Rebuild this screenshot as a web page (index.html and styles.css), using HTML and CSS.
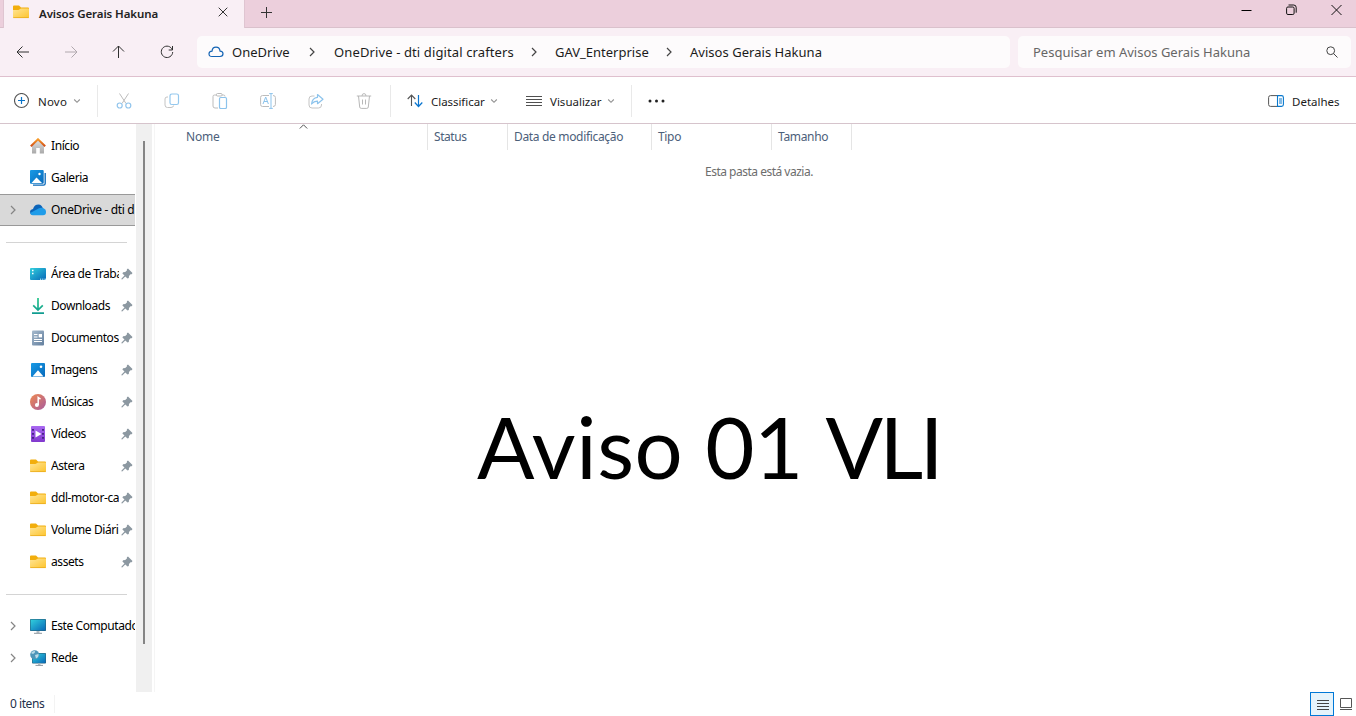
FILE: index.html
```html
<!DOCTYPE html>
<html lang="pt-BR">
<head>
<meta charset="utf-8">
<title>Avisos Gerais Hakuna</title>
<link rel="stylesheet" href="styles.css">
</head>
<body>
<svg class="defs" width="0" height="0">
  <defs>
    <linearGradient id="gFolder" x1="0" y1="0" x2="1" y2="1"><stop offset="0" stop-color="#ffe596"/><stop offset="1" stop-color="#fdc42d"/></linearGradient>
    <linearGradient id="gBlue" x1="0" y1="0" x2="1" y2="1"><stop offset="0" stop-color="#199be6"/><stop offset="1" stop-color="#0669bb"/></linearGradient>
    <linearGradient id="gTeal" x1="0" y1="0" x2="1" y2="1"><stop offset="0" stop-color="#31d0dd"/><stop offset="1" stop-color="#0868b8"/></linearGradient>
    <linearGradient id="gHouse" x1="0" y1="0" x2="0" y2="1"><stop offset="0" stop-color="#e2e2e2"/><stop offset="1" stop-color="#a9a9a9"/></linearGradient>
    <linearGradient id="gRoof" x1="0" y1="0" x2="0" y2="1"><stop offset="0" stop-color="#f79a28"/><stop offset="1" stop-color="#d04d16"/></linearGradient>
    <linearGradient id="gDown" gradientUnits="userSpaceOnUse" x1="0" y1="0" x2="0" y2="16"><stop offset="0" stop-color="#25c58a"/><stop offset="1" stop-color="#109b91"/></linearGradient>
    <linearGradient id="gDoc" x1="0" y1="0" x2="1" y2="1"><stop offset="0" stop-color="#a6bacd"/><stop offset="1" stop-color="#637f9e"/></linearGradient>
    <linearGradient id="gMusic" x1="0" y1="0" x2="1" y2="1"><stop offset="0" stop-color="#ef8950"/><stop offset="1" stop-color="#a85b9e"/></linearGradient>
    <linearGradient id="gVideo" x1="0" y1="0" x2="0" y2="1"><stop offset="0" stop-color="#a968f1"/><stop offset="1" stop-color="#8138cd"/></linearGradient>
    <symbol id="folder" viewBox="0 0 16 16"><path d="M0 2.500Q0 1.500 1 1.500h5l2 2h7q1 0 1 1v3H0z" fill="#f2ae0c"/><path d="M0 6h5.500L8 4.500h7.300q.7 0 .7.800v7.900q0 .8-.8.800H.8Q0 14 0 13.200z" fill="url(#gFolder)"/><path d="M.3 13.600h15.400" stroke="#e9a91b" stroke-width=".8"/></symbol>
    <symbol id="pin" viewBox="0 0 12 12"><path d="M7 .5 11.500 5 10.700 6.200 9.500 6.200 8 7.900 7.800 9.900 6.500 10.600 4.300 8.400 1.200 11.400.4 11.300.5 10.500 3.500 7.600 1.400 5.500 2.100 4.300 4.200 4.100 5.900 2.600 5.900 1.300z" fill="#8c98a1"/></symbol>
    <symbol id="chev" viewBox="0 0 8 12"><path d="M2 2 6 6 2 10" fill="none" stroke="currentColor" stroke-width="1.200"/></symbol>
    <symbol id="down" viewBox="0 0 8 6"><path d="m1.200 1.500 2.800 2.800 2.800-2.800" fill="none" stroke="#929292" stroke-width="1.100"/></symbol>
  </defs>
</svg>
<div class="window">
  <header class="titlebar">
    <div class="tab">
      <svg class="i16" width="16" height="16"><use href="#folder"/></svg>
      <span class="tab-title">Avisos Gerais Hakuna</span>
      <svg class="tab-close" width="10" height="10" viewBox="0 0 10 10"><path d="m.7.7 8.600 8.600m0-8.600L.7 9.300" stroke="#333" stroke-width="1"/></svg>
    </div>
    <svg class="new-tab" width="11" height="11" viewBox="0 0 11 11"><path d="M5.500 0v11M0 5.500h11" stroke="#333"/></svg>
    <div class="caption">
      <svg width="11" height="12" viewBox="0 0 11 12"><path d="M.5 6.500h10" stroke="#000"/></svg>
      <svg width="11" height="12" viewBox="0 0 11 12" fill="none" stroke="#111"><rect x=".6" y="3" width="7.500" height="7.500" rx="1.300"/><path d="M2.500 1h5.200q2.500 0 2.500 2.500v5.200"/></svg>
      <svg width="11" height="12" viewBox="0 0 11 12"><path d="m.5 1 10 10m0-10-10 10" stroke="#111"/></svg>
    </div>
  </header>

  <div class="navbar">
    <div class="nav-buttons">
      <svg width="14" height="14" viewBox="0 0 14 14" fill="none" stroke="#303030"><path d="M13 7H1m5.500-5.500L1 7l5.500 5.500"/></svg>
      <svg width="14" height="14" viewBox="0 0 14 14" fill="none" stroke="#b0a8ad"><path d="M1 7h12M7.500 1.500 13 7l-5.500 5.500"/></svg>
      <svg width="14" height="14" viewBox="0 0 14 14" fill="none" stroke="#303030"><path d="M6.500 13V1M1 6.500 6.500 1 12 6.500"/></svg>
      <svg width="14" height="14" viewBox="0 0 14 14" fill="none" stroke="#303030"><path d="M12.400 5A5.700 5.700 0 1 0 12.700 7M12.500 1v4H8.700"/></svg>
    </div>
    <div class="address">
      <svg class="cloud" width="16" height="12" viewBox="0 0 16 12"><path d="M4 10.500Q1 10.500 1 7.800 1 5.300 4 5.100 4.500 1.200 8 1.200q3.500 0 4.100 3.900 2.900.2 2.900 2.700 0 2.700-3 2.700z" fill="none" stroke="#1464b4" stroke-width="1.200"/></svg>
      <span class="crumb c1">OneDrive</span><svg class="sep" width="8" height="12"><use href="#chev"/></svg>
      <span class="crumb c2">OneDrive - dti digital crafters</span><svg class="sep" width="8" height="12"><use href="#chev"/></svg>
      <span class="crumb c3">GAV_Enterprise</span><svg class="sep" width="8" height="12"><use href="#chev"/></svg>
      <span class="crumb c4">Avisos Gerais Hakuna</span>
    </div>
    <div class="search"><span>Pesquisar em Avisos Gerais Hakuna</span>
      <svg width="12" height="12" viewBox="0 0 12 12" fill="none" stroke="#444"><circle cx="4.700" cy="4.700" r="3.900"/><path d="m7.500 7.500 4 4"/></svg>
    </div>
  </div>

  <div class="toolbar">
    <div class="group novo">
      <svg width="16" height="16" viewBox="0 0 16 16" fill="none"><circle cx="7.500" cy="7.500" r="7" stroke="#555" stroke-width="1.100"/><path d="M7.500 4v7M4 7.500h7" stroke="#0a74c9" stroke-width="1.200"/></svg>
      <span>Novo</span><svg class="dn" width="8" height="6"><use href="#down"/></svg>
    </div>
    <div class="group actions">
      <svg width="16" height="16" viewBox="0 0 16 16" fill="none"><path d="M3.500.5 10 10.500M12.500.5 6 10.500" stroke="#bcbcbc"/><circle cx="3.700" cy="12.500" r="2.500" stroke="#90c4ec" stroke-width="1.200"/><circle cx="12.300" cy="12.500" r="2.500" stroke="#90c4ec" stroke-width="1.200"/></svg>
      <svg width="16" height="16" viewBox="0 0 16 16" fill="none"><path d="M4 4H3Q1 4 1 6v6q0 2.500 2.500 2.500H7q2.300 0 2.600-2" stroke="#c4c4c4"/><rect x="6" y="1" width="8.500" height="10.500" rx="1.800" stroke="#94c8ee" stroke-width="1.200"/></svg>
      <svg width="16" height="16" viewBox="0 0 16 16" fill="none"><path d="M5 2H2.500Q1 2 1 3.500V13q0 2 2 2h3M10 2h1.500Q13 2 13 3.500" stroke="#bcbcbc"/><rect x="4.500" y=".5" width="5.500" height="2.500" rx="1" stroke="#bcbcbc"/><rect x="7.500" y="4.500" width="7" height="11" rx="1.300" stroke="#8cc3ec" stroke-width="1.200"/></svg>
      <svg width="16" height="16" viewBox="0 0 16 16" fill="none"><path d="M9 2.500H2.500Q.6 2.500.6 4.500v7q0 2 1.900 2H9M13 2.500q2.400 0 2.400 2v7q0 2-2.400 2" stroke="#bcbcbc"/><path d="m3 11 2.700-7 2.700 7M4 8.500h3.500M9.200.6h3.600M11 .6v14.800M9.200 15.400h3.600" stroke="#8cc3ec"/></svg>
      <svg width="16" height="16" viewBox="0 0 16 16" fill="none"><path d="M6.500 3H4Q1 3 1 6v6q0 3 3 3h6.500q3 0 3-3v-1" stroke="#c4c4c4"/><path d="M9.500 1.500 15 6.200l-5.500 4.500V8.200Q6 8 3.600 11 4 5 9.500 4.300z" stroke="#8cc3ec" stroke-width="1.200" stroke-linejoin="round"/></svg>
      <svg width="16" height="16" viewBox="0 0 16 16" fill="none" stroke="#b8b8b8"><path d="M.8 3h14.400M2.500 3l1.200 11q.2 1.400 1.500 1.400h5.600q1.300 0 1.500-1.400l1.200-11M6 3q0-2.400 2-2.400T10 3M6.500 6.500v5M9.500 6.500v5"/></svg>
    </div>
    <div class="group views">
      <svg width="16" height="16" viewBox="0 0 16 16" fill="none"><path d="M4.500 13V2M.7 6l3.800-4 3.800 4" stroke="#555" stroke-width="1.100"/><path d="M11.500 2v11.500m-3.700-4 3.700 4 3.800-4" stroke="#0b76cf" stroke-width="1.200"/></svg>
      <span class="classificar">Classificar</span><svg class="dn" width="8" height="6"><use href="#down"/></svg>
      <svg class="list-icon" width="16" height="16" viewBox="0 0 16 16"><path d="M0 3.500h16M0 6.500h16M0 9.500h16M0 12.500h16" stroke="#505050"/></svg>
      <span class="visualizar">Visualizar</span><svg class="dn" width="8" height="6"><use href="#down"/></svg>
    </div>
    <svg class="more" width="17" height="4" viewBox="0 0 17 4" fill="#222"><circle cx="2" cy="2" r="1.500"/><circle cx="8.500" cy="2" r="1.500"/><circle cx="15" cy="2" r="1.500"/></svg>
    <div class="details">
      <svg width="16" height="12" viewBox="0 0 16 12" fill="none"><path d="M9 .6H2.500Q.6.6.6 2.500v7q0 1.900 1.900 1.900H9" stroke="#555"/><path d="M9.500.6h4q1.900 0 1.900 1.900v7q0 1.900-1.900 1.900h-4zM11 4h3M11 6h3M11 8h3" stroke="#0878cd" stroke-width="1.100"/></svg>
      <span>Detalhes</span>
    </div>
  </div>

  <div class="main">
    <nav class="sidebar">
      <div class="row"><svg width="16" height="16" viewBox="0 0 16 16"><path d="M2 7l6-5.500L14 7v8.500H9.800V10H6.200v5.500H2z" fill="url(#gHouse)"/><path d="M.8 8.300 8 1.300l7.200 7" fill="none" stroke="url(#gRoof)" stroke-width="2"/></svg><span>Início</span></div>
      <div class="row"><svg width="16" height="16" viewBox="0 0 16 16"><path d="M3 15.200h10.500q1.700 0 1.700-1.700V3" fill="none" stroke="#0868b8" stroke-width="1.300"/><rect width="13.700" height="13.700" rx="1" fill="url(#gBlue)"/><path d="m1.500 13 5-5.500L12 13z" fill="#fff"/><circle cx="9.500" cy="4" r="1.200" fill="#fff"/></svg><span>Galeria</span></div>
      <div class="row selected"><svg class="exp" width="8" height="12"><use href="#chev"/></svg><svg width="16" height="16" viewBox="0 0 16 16"><path d="M2.500 13Q0 12.400 0 10q0-2.500 3-3Q4.500 2.500 8.500 2.600q3.500.2 4.500 4.200l-6 6.200z" fill="#0d65b9"/><path d="M2.500 13.200Q.5 12.800.2 11L9 6.200q4-1.300 6.500 1.500.5 1 .5 2.500 0 3-3 3z" fill="#1f9ce9"/></svg><span>OneDrive - dti d</span></div>
      <div class="divider"></div>
      <div class="row pinned"><svg width="16" height="16" viewBox="0 0 16 16"><rect y="2" width="16" height="12" rx="1" fill="url(#gTeal)"/><path d="M2 4.500h1.500M2 7.500h1.500" stroke="#fff" stroke-width="1.500"/><path d="M10 13.200h1.200m1 0h1.200m1 0H16" stroke="#dff"/></svg><span class="tight">Área de Traba</span><svg class="pin" width="12" height="12"><use href="#pin"/></svg></div>
      <div class="row pinned"><svg width="16" height="16" viewBox="0 0 16 16"><path d="M8 0v12M3.200 7.300 8 12l4.800-4.700M2 15.200h12" fill="none" stroke="url(#gDown)" stroke-width="1.700"/></svg><span>Downloads</span><svg class="pin" width="12" height="12"><use href="#pin"/></svg></div>
      <div class="row pinned"><svg width="16" height="16" viewBox="0 0 16 16"><rect x="2" y=".5" width="12" height="15" rx="1" fill="url(#gDoc)"/><path d="M4 4.500h3.500M4 7h3.500M4 9.500h8M4 11.500h8" stroke="#fff"/><rect x="8.700" y="4" width="3.300" height="3.400" fill="#fff"/></svg><span>Documentos</span><svg class="pin" width="12" height="12"><use href="#pin"/></svg></div>
      <div class="row pinned"><svg width="16" height="16" viewBox="0 0 16 16"><rect x="1" y="1" width="14" height="14" rx="1" fill="url(#gBlue)"/><path d="M2.500 14.500 8 8.300l5.500 6.200z" fill="#fff"/><circle cx="11" cy="4.700" r="1.300" fill="#fff"/></svg><span>Imagens</span><svg class="pin" width="12" height="12"><use href="#pin"/></svg></div>
      <div class="row pinned"><svg width="16" height="16" viewBox="0 0 16 16"><circle cx="8" cy="8" r="8" fill="url(#gMusic)"/><path d="M8.200 11V3.500l2.300 1.700" fill="none" stroke="#fff" stroke-width="1.500"/><circle cx="6.900" cy="11" r="2" fill="#fff"/></svg><span>Músicas</span><svg class="pin" width="12" height="12"><use href="#pin"/></svg></div>
      <div class="row pinned"><svg width="16" height="16" viewBox="0 0 16 16"><rect x="1" y="0" width="14" height="16" rx="1" fill="url(#gVideo)"/><path d="M3 3v12M13 3v12" stroke="#40207c" stroke-width="1.800" stroke-dasharray="1.800 2.200"/><path d="m5.500 4.500 6 3.500-6 3.500z" fill="#fff"/></svg><span>Vídeos</span><svg class="pin" width="12" height="12"><use href="#pin"/></svg></div>
      <div class="row pinned"><svg width="16" height="16"><use href="#folder"/></svg><span>Astera</span><svg class="pin" width="12" height="12"><use href="#pin"/></svg></div>
      <div class="row pinned"><svg width="16" height="16"><use href="#folder"/></svg><span>ddl-motor-ca</span><svg class="pin" width="12" height="12"><use href="#pin"/></svg></div>
      <div class="row pinned"><svg width="16" height="16"><use href="#folder"/></svg><span>Volume Diári</span><svg class="pin" width="12" height="12"><use href="#pin"/></svg></div>
      <div class="row pinned"><svg width="16" height="16"><use href="#folder"/></svg><span>assets</span><svg class="pin" width="12" height="12"><use href="#pin"/></svg></div>
      <div class="divider"></div>
      <div class="row"><svg class="exp" width="8" height="12"><use href="#chev"/></svg><svg width="16" height="16" viewBox="0 0 16 16"><rect y="1" width="16" height="12" rx=".8" fill="#27627e"/><rect x=".6" y="1.600" width="14.800" height="10.800" fill="url(#gTeal)"/><path d="M6.500 13h3v2h-3z" fill="#b5bdc3"/><path d="M4 15.300h8" stroke="#8d979e"/></svg><span>Este Computado</span></div>
      <div class="row"><svg class="exp" width="8" height="12"><use href="#chev"/></svg><svg width="16" height="16" viewBox="0 0 16 16"><rect x="2" y="3" width="14" height="10.500" rx=".8" fill="#27627e"/><rect x="2.600" y="3.600" width="12.800" height="9.300" fill="url(#gTeal)"/><path d="M8 13.500h2.500v1.700H8z" fill="#b5bdc3"/><path d="M5.500 15.400h7.500" stroke="#8d979e"/><circle cx="4.700" cy="4.700" r="4.500" fill="#4e96b9"/><path d="M1 3q2-2.500 4-2 .5 2-2 3zM5 5l3.500-1Q9 7 6 8.600z" fill="#b9dbe8"/></svg><span>Rede</span></div>
    </nav>
    <div class="track"><div class="thumb"></div></div>
    <section class="content">
      <div class="columns">
        <div class="col nome"><span>Nome</span><svg class="sort" width="9" height="6" viewBox="0 0 9 6"><path d="m.8 4.500 3.700-3.700 3.700 3.700" fill="none" stroke="#555"/></svg></div>
        <div class="col status">Status</div>
        <div class="col data">Data de modificação</div>
        <div class="col tipo">Tipo</div>
        <div class="col tamanho">Tamanho</div>
      </div>
      <p class="empty">Esta pasta está vazia.</p>
      <h1 class="notice"><span class="word-a">Aviso</span> <span class="word-b">01</span> <span class="word-c">VLI</span></h1>
    </section>
  </div>

  <footer class="statusbar">
    <span>0 itens</span>
    <div class="view-on"><svg width="12" height="12" viewBox="0 0 12 12"><path d="M0 1.500h12M0 4.500h12M0 7.500h12M0 10.500h12" stroke="#444"/></svg></div>
    <svg class="view-off" width="12" height="12" viewBox="0 0 12 12" fill="none" stroke="#555"><path d="M.5.5h11v9H.5zM0 11.500h12"/></svg>
  </footer>
</div>
</body>
</html>
```
FILE: styles.css
```css
* { box-sizing: border-box; }
body { margin: 0; font-family: "Noto Sans", "Open Sans", sans-serif; font-size: 12px; color: #1b1b1b; }
.defs { position: absolute; }
svg { display: block; flex: none; }
span { white-space: nowrap; }
.window { width: 1356px; height: 716px; display: flex; flex-direction: column; background: #fff; overflow: hidden; }

.titlebar { height: 28px; display: flex; background: #eccfdc; box-shadow: inset 0 -1px #dac1cc; padding-left: 3px; flex: none; }
.tab { width: 242px; height: 28px; display: flex; align-items: center; padding: 0 16px 4px 9px; background: #f9eff5; border: solid #dfc5d1; border-width: 0 1px; }
.tab-title { margin-left: 10px; width: 180px; font-weight: 600; font-size: 11.500px; letter-spacing: -.08px; color: #222; padding-top: 2px; }
.new-tab { margin: 7px 0 0 16px; }
.caption { margin-left: auto; display: flex; gap: 34px; padding: 4px 14px 0 0; }

.navbar { height: 49px; flex: none; display: flex; align-items: center; background: #f9eff5; border-bottom: 1px solid #dfc0ce; padding-right: 5px; }
.nav-buttons { width: 197px; display: flex; gap: 34px; padding-left: 16px; }
.address { width: 813px; height: 32px; display: flex; align-items: center; background: #fdfbfc; border-radius: 5px; padding-left: 11px; font-size: 13px; }
.crumb { margin-left: 8px; }
.c1 { width: 76px; }
.c2 { width: 196px; margin-left: 18px; letter-spacing: .12px; }
.c3 { width: 110px; margin-left: 17px; }
.c4 { margin-left: 17px; letter-spacing: .03px; }
.sep { color: #444; }
.search { margin-left: 8px; width: 333px; height: 32px; display: flex; align-items: center; justify-content: space-between; background: #fdfbfc; border-radius: 5px; padding: 0 13px 0 15px; font-size: 13px; color: #666; }

.toolbar { height: 47px; flex: none; display: flex; align-items: center; border-bottom: 1px solid #d6c4cc; font-size: 11.500px; padding-top: 1px; }
.toolbar span { padding-top: 1px; }
.group { height: 32px; display: flex; align-items: center; border-right: 1px solid #e9e9e9; }
.novo { width: 98px; padding-left: 14px; }
.novo span { margin-left: 8px; width: 35px; letter-spacing: .2px; }
.actions { width: 293px; padding-left: 18px; gap: 32px; }
.views { width: 241px; padding-left: 16px; }
.classificar { margin-left: 8px; width: 59px; letter-spacing: -.05px; }
.visualizar { margin-left: 8px; width: 57px; }
.list-icon { margin-left: 28px; }
.more { margin-left: 16px; }
.details { margin-left: auto; display: flex; align-items: center; width: 88px; }
.details span { margin-left: 8px; }

.main { height: 568px; flex: none; display: flex; }
.sidebar { width: 136px; padding: 6px 1px 0 0; overflow: hidden; }
.row { height: 32px; display: flex; align-items: center; padding-left: 30px; font-size: 12px; letter-spacing: -.42px; color: #000; overflow: hidden; }
.row span { margin-left: 5px; padding-bottom: 2px; flex: 1 1 0; min-width: 0; overflow: hidden; }
.row .tight { letter-spacing: -.5px; }
.row .exp { margin: 0 13px 0 -21px; color: #858585; }
.pinned { padding-right: 2px; }
.pin { margin-left: 2px; }
.selected { background: #d9d9d9; border: solid #999; border-width: 1px 0; letter-spacing: -.33px; }
.divider { height: 32px; padding: 16px 8px 0 6px; }
.divider::before { content: ""; display: block; height: 1px; background: #d4d4d4; }
.track { width: 16px; background: #f0f0f0; padding: 17px 0 0 7px; }
.thumb { width: 2px; height: 503px; background: #858585; }
.content { margin-left: 2px; flex: 1; border-left: 1px solid #f5f5f5; }
.columns { height: 26px; display: flex; font-size: 12px; letter-spacing: -.33px; color: #4c607a; line-height: 25px; }
.col { border-right: 1px solid #e5e5e5; padding-left: 6px; white-space: nowrap; }
.nome { width: 273px; padding-left: 31px; display: flex; }
.nome span { width: 113px; letter-spacing: -.2px; }
.status { width: 80px; letter-spacing: -.45px; }
.data { width: 144px; }
.tipo { width: 120px; }
.tamanho { width: 80px; }
.empty { margin: 13px 0 0 550px; line-height: 18px; font-size: 12px; letter-spacing: -.5px; color: #6d6d6d; }
.notice { margin: 215px 0 0 322px; font: 400 85px/100px Lato, "Noto Sans", sans-serif; color: #000; white-space: nowrap; }
.word-a { letter-spacing: .6px; }
.word-b { letter-spacing: -.5px; }
.word-c { margin-left: 1px; letter-spacing: -3.500px; }

.statusbar { height: 24px; flex: none; display: flex; align-items: center; padding-left: 10px; font-size: 12px; letter-spacing: -.45px; color: #1e2f4a; }
.statusbar > span { width: 45px; padding-bottom: 1px; border-right: 1px solid #f3f3f3; }
.view-on { margin-left: auto; width: 24px; height: 24px; border: 1px solid #0078d7; background: #e5f3fb; padding: 6px 0 0 6px; }
.view-off { margin: 0 4px 0 6px; }
```
